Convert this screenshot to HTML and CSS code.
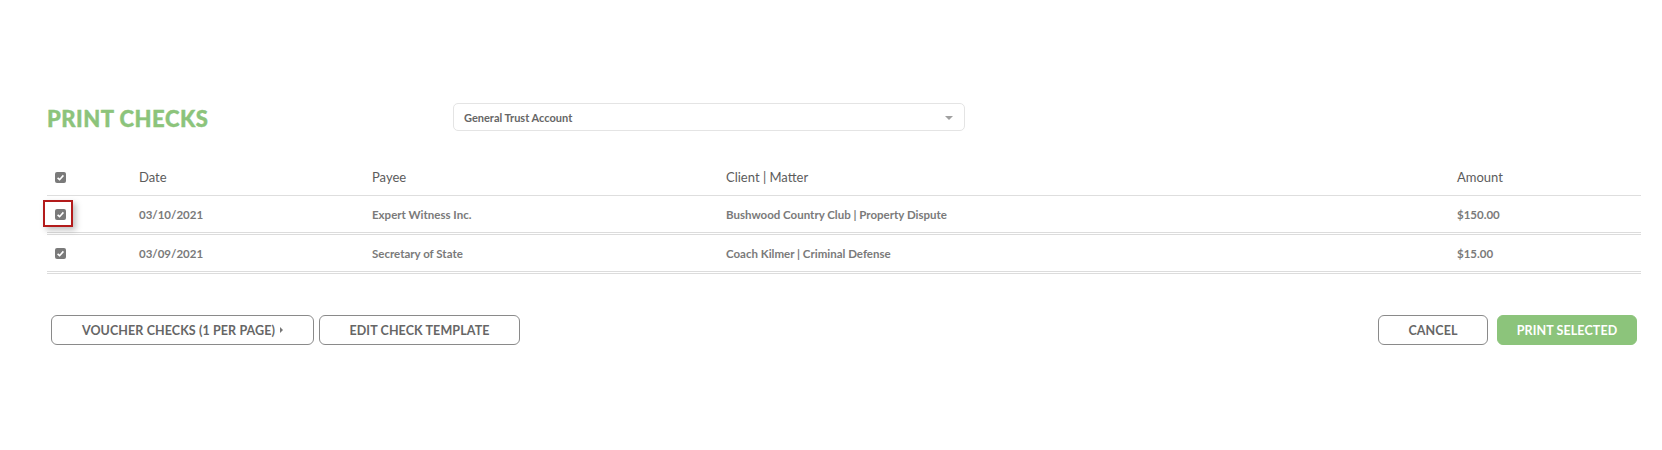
FILE: index.html
```html
<!DOCTYPE html>
<html>
<head>
<meta charset="utf-8">
<link rel="stylesheet" href="styles.css">
</head>
<body>
<div class="page">
  <div class="title-row">
    <h1 class="title">PRINT CHECKS</h1>
    <div class="select">
      <span class="select-text">General Trust Account</span>
      <span class="select-arrow"></span>
    </div>
  </div>

  <div class="table">
    <div class="row head">
      <div class="cell check"><span class="cb"><svg viewBox="0 0 11 11" width="11" height="11"><rect width="11" height="11" rx="2" fill="#7a7a7a"/><path d="M2.6 5.8 L4.6 7.7 L8.4 3.4" fill="none" stroke="#fff" stroke-width="1.6"/></svg></span></div>
      <div class="cell">Date</div>
      <div class="cell">Payee</div>
      <div class="cell">Client | Matter</div>
      <div class="cell">Amount</div>
    </div>
    <div class="row body">
      <div class="cell check"><span class="cb"><svg viewBox="0 0 11 11" width="11" height="11"><rect width="11" height="11" rx="2" fill="#7a7a7a"/><path d="M2.6 5.8 L4.6 7.7 L8.4 3.4" fill="none" stroke="#fff" stroke-width="1.6"/></svg></span><span class="highlight"></span></div>
      <div class="cell">03/10/2021</div>
      <div class="cell">Expert Witness Inc.</div>
      <div class="cell">Bushwood Country Club | Property Dispute</div>
      <div class="cell">$150.00</div>
    </div>
    <div class="row body">
      <div class="cell check"><span class="cb"><svg viewBox="0 0 11 11" width="11" height="11"><rect width="11" height="11" rx="2" fill="#7a7a7a"/><path d="M2.6 5.8 L4.6 7.7 L8.4 3.4" fill="none" stroke="#fff" stroke-width="1.6"/></svg></span></div>
      <div class="cell">03/09/2021</div>
      <div class="cell">Secretary of State</div>
      <div class="cell">Coach Kilmer | Criminal Defense</div>
      <div class="cell">$15.00</div>
    </div>
  </div>

  <div class="actions">
    <div class="group">
      <button class="btn voucher">VOUCHER CHECKS (1 PER PAGE) <span class="caret"></span></button>
      <button class="btn edit">EDIT CHECK TEMPLATE</button>
    </div>
    <div class="group right">
      <button class="btn cancel">CANCEL</button>
      <button class="btn primary">PRINT SELECTED</button>
    </div>
  </div>
</div>
</body>
</html>
```

FILE: styles.css
```css
* { box-sizing: border-box; }
html, body { margin: 0; padding: 0; background: #fff; }
body { font-family: Lato, "Liberation Sans", sans-serif; }

.page {
  padding: 103px 21px 0 47px;
}

.title-row {
  display: flex;
  align-items: center;
  height: 28px;
}
.title {
  margin: 0;
  width: 406px;
  font-size: 22px;
  font-weight: 900;
  color: #8cc47b;
  letter-spacing: 0.5px;
  line-height: 28px;
  padding-top: 4px;
  -webkit-text-stroke: 0.4px #8cc47b;
}
.select {
  width: 512px;
  height: 28px;
  border: 1px solid #e4e4e4;
  border-radius: 5px;
  display: flex;
  align-items: center;
  justify-content: space-between;
  padding: 0 11px 0 10px;
}
.select-text {
  font-size: 11px;
  font-weight: 700;
  color: #666;
}
.select-arrow {
  width: 0; height: 0;
  border-left: 4px solid transparent;
  border-right: 4px solid transparent;
  border-top: 4px solid #a0a0a0;
  margin-top: 2px;
}

.table { margin-top: 28px; }
.row {
  display: grid;
  grid-template-columns: 92px 233px 354px 731px 1fr;
  align-items: center;
}
.row.head {
  height: 37px;
  border-bottom: 1px solid #dedede;
  font-size: 13px;
  color: #5c5c5c;
}
.row.body {
  height: 39px;
  border-bottom: 3px double #dcdcdc;
  font-size: 11.5px;
  font-weight: 700;
  color: #7a7a7a;
}
.cell { white-space: nowrap; }
.cell.check {
  position: relative;
  padding-left: 8px;
  height: 11px;
}
.cb { display: block; width: 11px; height: 11px; }
.cb svg { display: block; }
.highlight {
  position: absolute;
  left: -4px;
  top: -9px;
  width: 30px;
  height: 27px;
  border: 2px solid #b31b1b;
  box-shadow: 3px 3px 6px rgba(0,0,0,0.25);
}

.actions {
  margin-top: 41px;
  display: flex;
  justify-content: space-between;
  padding: 0 4px;
}
.group { display: flex; gap: 5px; }
.group.right { gap: 9px; }
.btn {
  height: 30px;
  border: 1px solid #8a8a8a;
  border-radius: 6px;
  background: #fff;
  font-family: Lato, "Liberation Sans", sans-serif;
  font-size: 12.5px;
  font-weight: 700;
  letter-spacing: 0.1px;
  color: #666;
  padding: 0;
  display: flex;
  align-items: center;
  justify-content: center;
}
.voucher { width: 263px; }
.edit { width: 201px; }
.cancel { width: 110px; }
.primary {
  width: 140px;
  background: #8cc47b;
  border-color: #8cc47b;
  color: #fff;
}
.caret {
  display: inline-block;
  width: 0; height: 0;
  border-top: 3px solid transparent;
  border-bottom: 3px solid transparent;
  border-left: 3px solid #777;
  margin-left: 5px;
}
```
